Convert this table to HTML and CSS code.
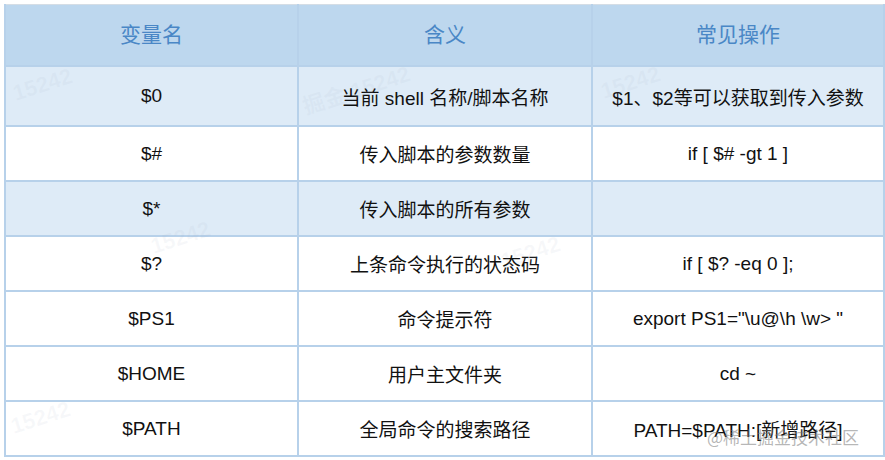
FILE: index.html
```html
<!DOCTYPE html>
<html lang="zh-CN">
<head>
<meta charset="utf-8">
<link rel="stylesheet" href="styles.css">
</head>
<body>
<div class="wrap">
<table class="vars">
  <colgroup><col class="c1"><col class="c2"><col class="c3"></colgroup>
  <thead>
    <tr class="head"><th>变量名</th><th>含义</th><th>常见操作</th></tr>
  </thead>
  <tbody>
    <tr class="alt first"><td>$0</td><td>当前 shell 名称/脚本名称</td><td>$1、$2等可以获取到传入参数</td></tr>
    <tr><td>$#</td><td>传入脚本的参数数量</td><td>if [ $# -gt 1 ]</td></tr>
    <tr class="alt"><td>$*</td><td>传入脚本的所有参数</td><td></td></tr>
    <tr><td>$?</td><td>上条命令执行的状态码</td><td>if [ $? -eq 0 ];</td></tr>
    <tr><td>$PS1</td><td>命令提示符</td><td>export PS1="\u@\h \w&gt; "</td></tr>
    <tr><td>$HOME</td><td>用户主文件夹</td><td>cd ~</td></tr>
    <tr><td>$PATH</td><td>全局命令的搜索路径</td><td>PATH=$PATH:[新增路径]</td></tr>
  </tbody>
</table>
<span class="wm w1">15242</span>
<span class="wm w2">掘金 15242</span>
<span class="wm w3">15242</span>
<span class="wm w4">15242</span>
<span class="wm w5">15242</span>
<span class="wm w6">15242</span>
<span class="brand">@稀土掘金技术社区</span>
</div>
</body>
</html>
```
FILE: styles.css
```css
html, body {
  margin: 0;
  padding: 0;
  background: #ffffff;
}
.wrap {
  position: relative;
  width: 885px;
  height: 460px;
  padding: 4px 0 0 4px;
  box-sizing: border-box;
}
.vars {
  border-collapse: collapse;
  table-layout: fixed;
  width: 879px;
  font-family: "Liberation Sans", "Noto Sans CJK SC", sans-serif;
  font-size: 19px;
  color: #111;
}
.c1 { width: 293px; }
.c2 { width: 294px; }
.c3 { width: 292px; }
.vars th, .vars td {
  border: 2px solid #b7d1ea;
  text-align: center;
  vertical-align: middle;
  padding: 0;
}
.vars thead th {
  border-top: 1px solid #d5dde5;
  background: #bdd7ee;
  color: #4a87c6;
  font-weight: normal;
  font-size: 21px;
  font-family: "Noto Sans CJK SC", sans-serif;
  height: 56px;
  padding-bottom: 4px;
}
.vars tbody tr { height: 55px; }
.vars tbody tr.first { height: 60px; }
.vars tbody tr.alt td { background: #deebf7; }
.wm {
  position: absolute;
  font-family: "Liberation Sans", "Noto Sans CJK SC", sans-serif;
  font-size: 22px;
  font-weight: bold;
  color: rgba(160, 175, 195, 0.09);
  transform: rotate(-18deg);
  pointer-events: none;
}
.w1 { left: 12px; top: 72px; }
.w2 { left: 300px; top: 72px; }
.w3 { left: 600px; top: 70px; }
.w4 { left: 150px; top: 225px; }
.w5 { left: 500px; top: 240px; }
.w6 { left: 10px; top: 405px; }
.brand {
  position: absolute;
  left: 707px;
  top: 424px;
  font-family: "Noto Sans CJK SC", sans-serif;
  font-size: 17px;
  color: rgba(120, 120, 120, 0.55);
  pointer-events: none;
}
```
